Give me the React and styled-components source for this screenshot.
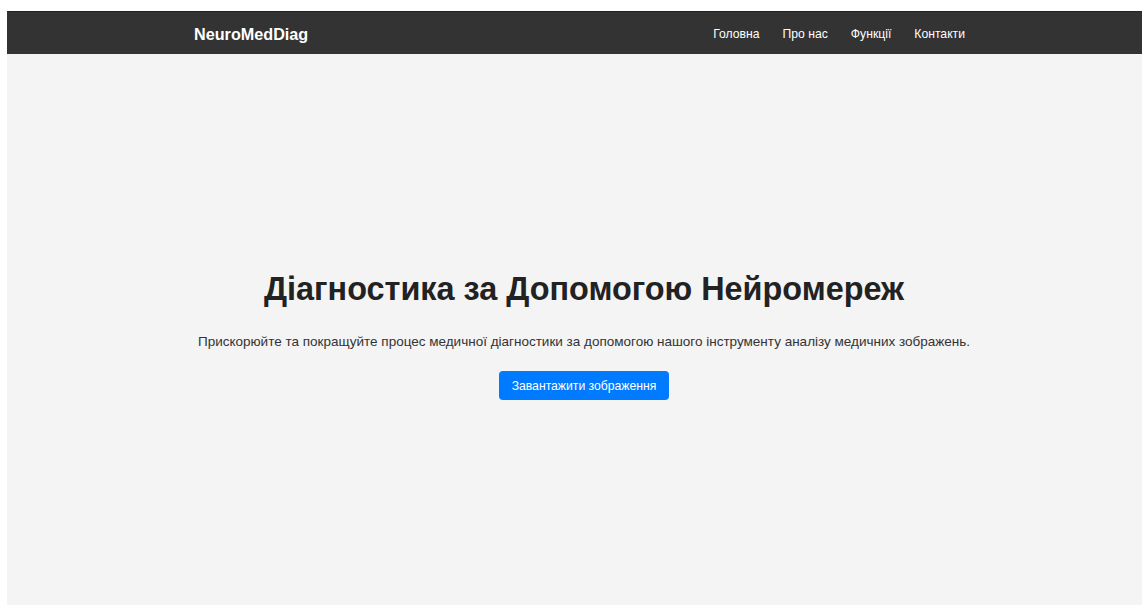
import React from 'react'
import styled, { createGlobalStyle } from 'styled-components'

const GlobalStyle = createGlobalStyle`
  html, body {
    margin: 0;
    padding: 0;
    background: #fff;
    overflow: hidden;
  }
  body {
    font-family: "Liberation Sans", Arial, sans-serif;
  }
`

const Page = styled.div`
  margin: 11px 0 0 7px;
  width: 1154px;
  height: 594px;
  display: flex;
  flex-direction: column;
  background: #f4f4f4;
`

const Header = styled.header`
  background: #333;
  border-top: 1px solid #222;
  height: 42px;
  flex: 0 0 auto;
`

const Bar = styled.div`
  width: 800px;
  height: 100%;
  margin: 0 auto;
  padding: 2px 19px 0 10px;
  box-sizing: border-box;
  display: flex;
  align-items: center;
  justify-content: space-between;
`

const Logo = styled.a`
  color: #fff;
  font-size: 16.2px;
  font-weight: bold;
  text-decoration: none;
`

const Links = styled.nav`
  display: flex;
  gap: 23px;
`

const Link = styled.a`
  color: #fff;
  font-size: 12.2px;
  text-decoration: none;
`

const Hero = styled.section`
  flex: 1;
  display: flex;
  flex-direction: column;
  align-items: center;
  padding-top: 217px;
  text-align: center;
`

const Title = styled.h1`
  margin: 0;
  font-size: 32.4px;
  font-weight: bold;
  color: #222;
`

const Lead = styled.p`
  margin: 26px 0 22px;
  font-size: 13.5px;
  color: #333;
`

const Button = styled.button`
  background: #007bff;
  color: #fff;
  border: none;
  border-radius: 4px;
  padding: 0 13px;
  height: 29px;
  font-family: inherit;
  font-size: 12.2px;
  cursor: pointer;
`

const navItems = ['Головна', 'Про нас', 'Функції', 'Контакти']

export default function App() {
  return (
    <>
      <GlobalStyle />
      <Page>
        <Header>
          <Bar>
            <Logo href="#">NeuroMedDiag</Logo>
            <Links>
              {navItems.map(item => (
                <Link href="#" key={item}>{item}</Link>
              ))}
            </Links>
          </Bar>
        </Header>
        <Hero>
          <Title>Діагностика за Допомогою Нейромереж</Title>
          <Lead>Прискорюйте та покращуйте процес медичної діагностики за допомогою нашого інструменту аналізу медичних зображень.</Lead>
          <Button>Завантажити зображення</Button>
        </Hero>
      </Page>
    </>
  )
}
